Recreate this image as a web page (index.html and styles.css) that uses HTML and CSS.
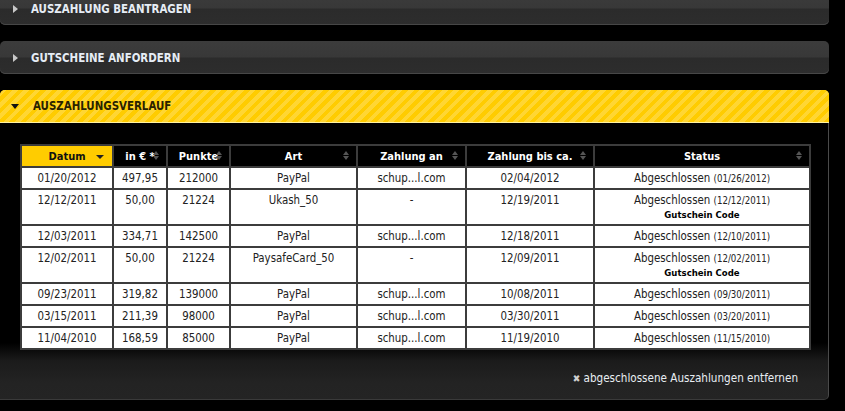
FILE: index.html
```html
<!DOCTYPE html>
<html lang="de">
<head>
<meta charset="utf-8">
<title>Auszahlungen</title>
<link rel="stylesheet" href="styles.css">
</head>
<body>
<div class="accordion">
  <div class="bar bar-closed bar-first"><span class="arrow-right"></span><span class="bar-title">AUSZAHLUNG BEANTRAGEN</span></div>
  <div class="bar bar-closed"><span class="arrow-right"></span><span class="bar-title">GUTSCHEINE ANFORDERN</span></div>
  <div class="bar bar-open"><span class="arrow-down"></span><span class="bar-title">AUSZAHLUNGSVERLAUF</span></div>
  <div class="panel">
    <table class="history">
      <colgroup>
        <col class="c1"><col class="c2"><col class="c3"><col class="c4"><col class="c5"><col class="c6"><col class="c7">
      </colgroup>
      <thead>
        <tr>
          <th class="sorted">Datum<span class="sort-active"></span></th>
          <th>in € *<span class="sort"></span></th>
          <th>Punkte<span class="sort"></span></th>
          <th>Art<span class="sort"></span></th>
          <th>Zahlung an<span class="sort"></span></th>
          <th>Zahlung bis ca.<span class="sort"></span></th>
          <th>Status<span class="sort"></span></th>
        </tr>
      </thead>
      <tbody>
        <tr><td>01/20/2012</td><td>497,95</td><td>212000</td><td>PayPal</td><td>schup...l.com</td><td>02/04/2012</td><td>Abgeschlossen <small>(01/26/2012)</small></td></tr>
        <tr class="tall"><td>12/12/2011</td><td>50,00</td><td>21224</td><td>Ukash_50</td><td>-</td><td>12/19/2011</td><td>Abgeschlossen <small>(12/12/2011)</small><b class="code">Gutschein Code</b></td></tr>
        <tr><td>12/03/2011</td><td>334,71</td><td>142500</td><td>PayPal</td><td>schup...l.com</td><td>12/18/2011</td><td>Abgeschlossen <small>(12/10/2011)</small></td></tr>
        <tr class="tall"><td>12/02/2011</td><td>50,00</td><td>21224</td><td>PaysafeCard_50</td><td>-</td><td>12/09/2011</td><td>Abgeschlossen <small>(12/02/2011)</small><b class="code">Gutschein Code</b></td></tr>
        <tr><td>09/23/2011</td><td>319,82</td><td>139000</td><td>PayPal</td><td>schup...l.com</td><td>10/08/2011</td><td>Abgeschlossen <small>(09/30/2011)</small></td></tr>
        <tr><td>03/15/2011</td><td>211,39</td><td>98000</td><td>PayPal</td><td>schup...l.com</td><td>03/30/2011</td><td>Abgeschlossen <small>(03/20/2011)</small></td></tr>
        <tr><td>11/04/2010</td><td>168,59</td><td>85000</td><td>PayPal</td><td>schup...l.com</td><td>11/19/2010</td><td>Abgeschlossen <small>(11/15/2010)</small></td></tr>
      </tbody>
    </table>
    <div class="panel-footer">
      <a class="remove-link" href="#"><span class="x">✖</span> abgeschlossene Auszahlungen entfernen</a>
    </div>
  </div>
</div>
</body>
</html>
```

FILE: styles.css
```css
html, body {
  margin: 0;
  padding: 0;
  background: #000;
}
body {
  font-family: "DejaVu Sans Condensed", "DejaVu Sans", sans-serif;
  overflow: hidden;
}
.accordion {
  width: 829px;
  display: flex;
  flex-direction: column;
}
.bar {
  height: 33px;
  display: flex;
  align-items: center;
  border-radius: 5px;
  box-sizing: border-box;
  padding-left: 11px;
}
.bar-first {
  margin-top: -8px;
}
.bar + .bar {
  margin-top: 16px;
}
.bar-closed {
  background: linear-gradient(to bottom, #3c3c3c 0%, #383838 48%, #2b2b2b 52%, #2d2d2d 100%);
  box-shadow: inset 0 -1px 0 #474747;
}
.bar-open {
  border-radius: 5px 5px 0 0;
  background-color: #ffcc00;
  background-image: repeating-linear-gradient(-45deg, #ffcc00 0, #ffcc00 4px, #ffd633 4px, #ffd633 8px);
  border-bottom: 1px solid #fff2a0;
}
.bar-title {
  font-family: "DejaVu Sans Condensed", "DejaVu Sans", sans-serif;
  font-weight: bold;
  font-size: 11.4px;
  letter-spacing: 0;
  margin-left: 13px;
  color: #e6edf5;
}
.bar-open .bar-title {
  color: #2a2200;
}
.arrow-right {
  width: 0;
  height: 0;
  border-top: 4px solid transparent;
  border-bottom: 4px solid transparent;
  border-left: 5px solid #c8c8c8;
  margin-left: 2px;
}
.arrow-down {
  width: 0;
  height: 0;
  border-left: 4px solid transparent;
  border-right: 4px solid transparent;
  border-top: 5px solid #111;
  margin-right: 1px;
}
.panel {
  height: 277px;
  box-sizing: border-box;
  border-right: 1px solid #4a4a4a;
  border-bottom: 1px solid #3a3a3a;
  border-radius: 0 0 5px 0;
  background: linear-gradient(to bottom, #000 0, #000 220px, #1b1b1b 238px, #232323 260px, #242424 100%);
  padding: 21px 0 0 20px;
  display: flex;
  flex-direction: column;
}
.history {
  width: 789px;
  border-collapse: collapse;
  table-layout: fixed;
  font-size: 11.4px;
  color: #222;
  border: 2px solid #3c3c3c;
}
.c1 { width: 92px; }
.c2 { width: 54px; }
.c3 { width: 63px; }
.c4 { width: 127px; }
.c5 { width: 109px; }
.c6 { width: 128px; }
.c7 { width: 216px; }
.history th {
  position: relative;
  height: 20px;
  padding: 0;
  background: #000;
  color: #fff;
  font-weight: bold;
  font-size: 11px;
  border: 2px solid #3c3c3c;
  text-align: center;
}
.history th.sorted {
  background: #ffcc00;
  color: #111;
}
.sort {
  position: absolute;
  right: 6px;
  top: 5px;
  width: 7px;
  height: 9px;
}
.sort::before, .sort::after {
  content: "";
  position: absolute;
  left: 0;
  border-left: 3.5px solid transparent;
  border-right: 3.5px solid transparent;
}
.sort::before {
  top: 0;
  border-bottom: 4px solid #555;
}
.sort::after {
  bottom: 0;
  border-top: 4px solid #555;
}
.sort-active {
  position: absolute;
  right: 8px;
  top: 9px;
  border-left: 4px solid transparent;
  border-right: 4px solid transparent;
  border-top: 4px solid #222;
}
.history td {
  background: #fff;
  border: 2px solid #3c3c3c;
  text-align: center;
  vertical-align: top;
  height: 16px;
  padding: 4px 0 0 0;
  line-height: 13px;
  white-space: nowrap;
}
.history tr.tall td {
  height: 30px;
}
.history small {
  font-size: 9.6px;
}
.code {
  display: block;
  font-size: 9.5px;
  color: #000;
  margin-top: 1px;
}
.panel-footer {
  display: flex;
  justify-content: flex-end;
  padding: 21px 30px 0 0;
}
.remove-link {
  color: #e8edf2;
  text-decoration: none;
  font-size: 11.6px;
}
.remove-link .x {
  font-size: 10px;
  color: #cfcfcf;
}
```
